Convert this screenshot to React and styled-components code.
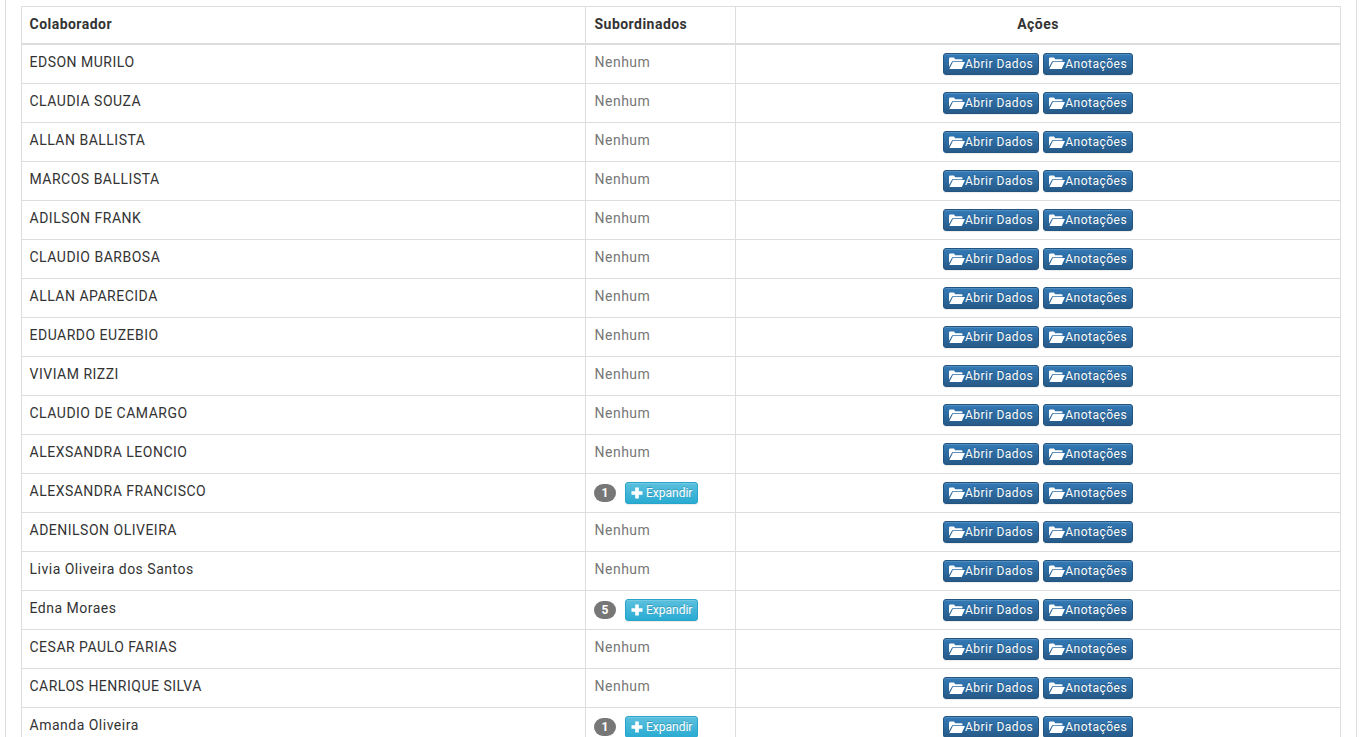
import React from 'react'
import styled, { createGlobalStyle } from 'styled-components'

const people = [
  { name: 'EDSON MURILO' },
  { name: 'CLAUDIA SOUZA' },
  { name: 'ALLAN BALLISTA' },
  { name: 'MARCOS BALLISTA' },
  { name: 'ADILSON FRANK' },
  { name: 'CLAUDIO BARBOSA' },
  { name: 'ALLAN APARECIDA' },
  { name: 'EDUARDO EUZEBIO' },
  { name: 'VIVIAM RIZZI' },
  { name: 'CLAUDIO DE CAMARGO' },
  { name: 'ALEXSANDRA LEONCIO' },
  { name: 'ALEXSANDRA FRANCISCO', subs: 1 },
  { name: 'ADENILSON OLIVEIRA' },
  { name: 'Livia Oliveira dos Santos' },
  { name: 'Edna Moraes', subs: 5 },
  { name: 'CESAR PAULO FARIAS' },
  { name: 'CARLOS HENRIQUE SILVA' },
  { name: 'Amanda Oliveira', subs: 1 },
]

const GlobalStyle = createGlobalStyle`
  html, body {
    margin: 0;
    height: 100%;
    overflow: hidden;
    background: #fff;
  }
  * {
    box-sizing: border-box;
  }
`

const Page = styled.div`
  width: 1372px;
  height: 737px;
  padding: 0 15px 0 5px;
  overflow: hidden;
  font-family: Roboto, sans-serif;
`

const Panel = styled.div`
  border-left: 1px solid #ddd;
  border-right: 1px solid #ddd;
  padding: 6px 15px 0;
  min-height: 737px;
`

const Table = styled.table`
  width: 1319px;
  table-layout: fixed;
  border-collapse: collapse;
  border: 1px solid #ddd;
  font-size: 14px;
  color: #333;
`

const HeaderCell = styled.th`
  height: 37px;
  padding: 6px 8.5px 8px;
  border: 1px solid #ddd;
  border-bottom: 2px solid #ddd;
  font-weight: 700;
  letter-spacing: 0.47px;
  text-align: ${(p) => (p.$center ? 'center' : 'left')};

  &:first-child {
    padding-left: 7.5px;
  }
`

const Row = styled.tr`
  height: 39px;

  &:first-child {
    height: 40px;
  }
`

const Cell = styled.td`
  padding: 0 8.5px 4px;
  border: 1px solid #ddd;
  vertical-align: middle;
  letter-spacing: 0.5px;

  &:first-child {
    padding-left: 7.5px;
  }
`

const ActionsCell = styled.td`
  padding: 0 8px;
  border: 1px solid #ddd;
  vertical-align: middle;
  text-align: center;
`

const Muted = styled.span`
  color: #777;
`

const SubsWrap = styled.div`
  display: flex;
  align-items: center;
  gap: 9px;
  margin-left: -0.5px;
  padding-top: 4px;
`

const Badge = styled.span`
  display: inline-block;
  min-width: 22px;
  padding: 3px 7px;
  border-radius: 10px;
  background: #777;
  color: #fff;
  font-size: 12px;
  font-weight: 700;
  line-height: 1;
  text-align: center;
  letter-spacing: 0;
`

const Button = styled.button`
  display: inline-flex;
  align-items: center;
  height: 22px;
  padding: 1px 5px;
  border: 1px solid;
  border-radius: 3px;
  color: #fff;
  font-family: Roboto, sans-serif;
  font-size: 12px;
  line-height: 1.5;
  letter-spacing: 0.5px;
  text-shadow: 0 -1px 0 rgba(0, 0, 0, 0.2);
  box-shadow: inset 0 1px 0 rgba(255, 255, 255, 0.15), 0 1px 1px rgba(0, 0, 0, 0.075);
`

const PrimaryButton = styled(Button)`
  margin-left: 4px;
  border-color: #245580;
  background: linear-gradient(to bottom, #337ab7 0%, #265a88 100%);

  &:first-child {
    margin-left: 0;
  }
`

const InfoButton = styled(Button)`
  border-color: #28a4c9;
  background: linear-gradient(to bottom, #5bc0de 0%, #2aabd2 100%);
  letter-spacing: 0;
`

const FolderSvg = styled.svg`
  width: 16px;
  height: 13px;
  flex: none;
  fill: #fff;
`

const PlusSvg = styled.svg`
  width: 12px;
  height: 12px;
  margin-right: 3px;
  flex: none;
  fill: #fff;
`

const FolderOpen = () => (
  <FolderSvg viewBox="0 0 16 13">
    <path d="M0 1.8 Q0 0.6 1.2 0.6 H5 L6.2 2.2 H12.5 Q13.5 2.2 13.5 3.2 V4.2 H3.2 L0 10 Z" />
    <path d="M3.9 5 H16 L12.8 12 H0.4 Z" />
  </FolderSvg>
)

const Plus = () => (
  <PlusSvg viewBox="0 0 12 12">
    <path d="M4.2 0.5 H7.8 V4.2 H11.5 V7.8 H7.8 V11.5 H4.2 V7.8 H0.5 V4.2 H4.2 Z" />
  </PlusSvg>
)

function App() {
  return (
    <Page>
      <GlobalStyle />
      <Panel>
        <Table>
          <colgroup>
            <col width="564" />
            <col width="150" />
            <col width="605" />
          </colgroup>
          <thead>
            <tr>
              <HeaderCell>Colaborador</HeaderCell>
              <HeaderCell>Subordinados</HeaderCell>
              <HeaderCell $center>Ações</HeaderCell>
            </tr>
          </thead>
          <tbody>
            {people.map((person) => (
              <Row key={person.name}>
                <Cell>{person.name}</Cell>
                <Cell>
                  {person.subs ? (
                    <SubsWrap>
                      <Badge>{person.subs}</Badge>
                      <InfoButton><Plus />Expandir</InfoButton>
                    </SubsWrap>
                  ) : (
                    <Muted>Nenhum</Muted>
                  )}
                </Cell>
                <ActionsCell>
                  <PrimaryButton><FolderOpen />Abrir Dados</PrimaryButton>
                  <PrimaryButton><FolderOpen />Anotações</PrimaryButton>
                </ActionsCell>
              </Row>
            ))}
          </tbody>
        </Table>
      </Panel>
    </Page>
  )
}

export default App
